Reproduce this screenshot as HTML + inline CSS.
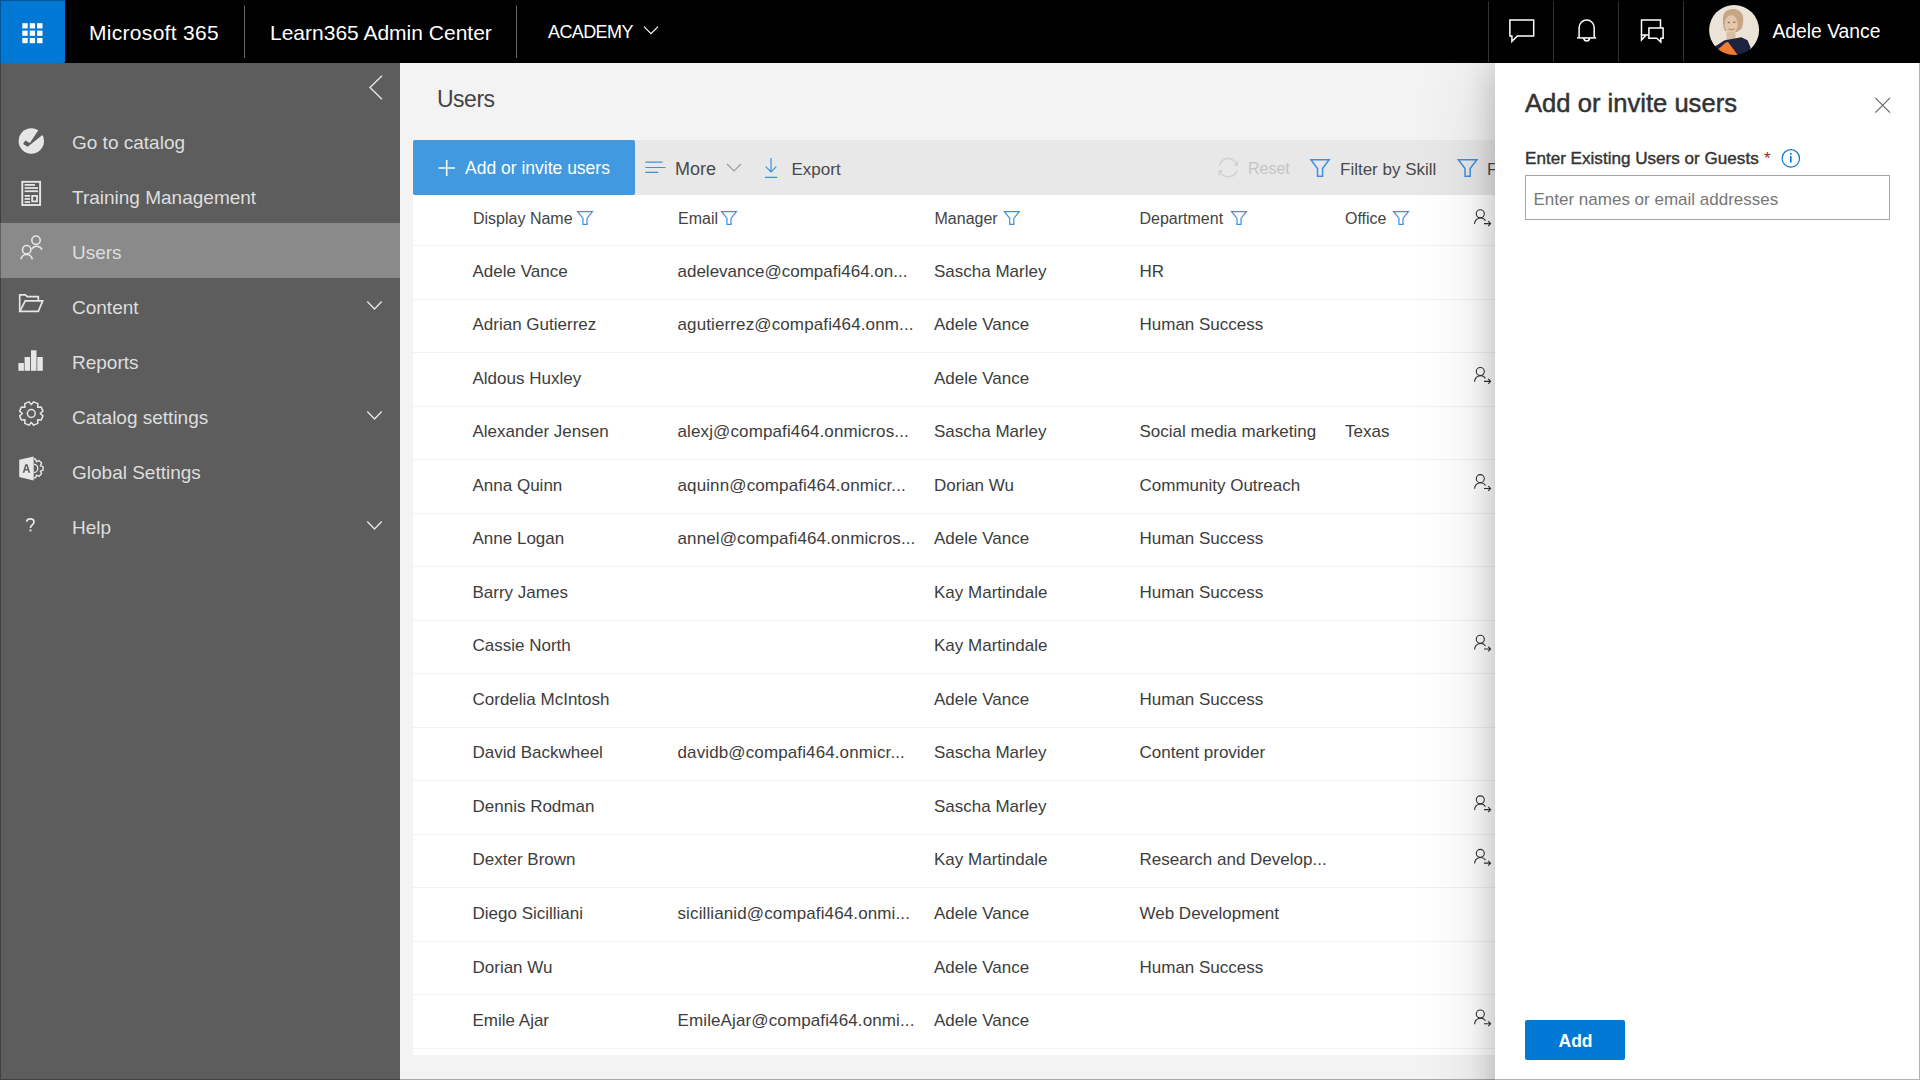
<!DOCTYPE html>
<html><head><meta charset="utf-8"><style>
*{box-sizing:border-box;margin:0;padding:0}
html,body{width:1920px;height:1080px;overflow:hidden;background:#f3f3f3;font-family:"Liberation Sans",sans-serif}
.t{position:absolute;white-space:nowrap}
.b{position:absolute}
svg{position:absolute;left:0;top:0;overflow:visible}
</style></head><body>
<div class="b" style="left:400px;top:63px;width:1520px;height:1017px;background:#f3f3f3"></div>
<div class="b" style="left:0;top:63px;width:400px;height:1017px;background:#5d5d5d"></div>
<div class="b" style="left:0;top:223px;width:400px;height:55px;background:#8a8a8a"></div>
<div class="t" style="left:72px;top:132.62px;font-size:19px;line-height:19px;color:#dedede;">Go to catalog</div>

<div class="t" style="left:72px;top:187.62px;font-size:19px;line-height:19px;color:#dedede;">Training Management</div>

<div class="t" style="left:72px;top:242.62px;font-size:19px;line-height:19px;color:#dedede;">Users</div>

<div class="t" style="left:72px;top:297.62px;font-size:19px;line-height:19px;color:#dedede;">Content</div>

<div class="t" style="left:72px;top:352.62px;font-size:19px;line-height:19px;color:#dedede;">Reports</div>

<div class="t" style="left:72px;top:407.62px;font-size:19px;line-height:19px;color:#dedede;">Catalog settings</div>

<div class="t" style="left:72px;top:462.62px;font-size:19px;line-height:19px;color:#dedede;">Global Settings</div>

<div class="t" style="left:72px;top:517.62px;font-size:19px;line-height:19px;color:#dedede;">Help</div>

<svg width="1920" height="1080"><path d="M382,75.8 L370,87.5 L382,99.2" fill="none" stroke="#e6e6e6" stroke-width="1.4"/><defs><mask id="m1"><rect x="0" y="0" width="1920" height="1080" fill="#fff"/><path d="M25.2,140.4 L29.9,143 L38.3,130.3 L46,127 L46,134 L41.8,135.6 L27.7,146.8 L23.1,143.9 Z" fill="#000"/></mask></defs><circle cx="31.3" cy="141" r="12.7" fill="#e6e6e6" mask="url(#m1)"/><rect x="22.3" y="181.8" width="17.8" height="23.2" fill="none" stroke="#e6e6e6" stroke-width="1.9"/><rect x="24.6" y="184" width="10.4" height="1.8" fill="#e6e6e6"/><rect x="24.6" y="187.1" width="13.4" height="1.8" fill="#e6e6e6"/><rect x="24.6" y="190.3" width="13.4" height="1.8" fill="#e6e6e6"/><rect x="24.6" y="195" width="5.5" height="1.8" fill="#e6e6e6"/><rect x="24.6" y="198" width="5.5" height="1.8" fill="#e6e6e6"/><rect x="24.6" y="201.2" width="5.5" height="1.8" fill="#e6e6e6"/><rect x="32.2" y="195.9" width="4.8" height="5.5" fill="none" stroke="#e6e6e6" stroke-width="1.8"/><g fill="none" stroke="#e6e6e6" stroke-width="1.6"><circle cx="36" cy="240.2" r="4.2"/><path d="M31.7,249.2 A5.7,5.7 0 0 1 41.9,249.6"/><circle cx="26.7" cy="249.7" r="4.2"/><path d="M21,259.3 A5.7,5.7 0 0 1 32.3,259.3"/></g><g fill="none" stroke="#e6e6e6" stroke-width="1.7" stroke-linejoin="miter"><path d="M19.7,311.5 V294.8 H25.3 L27.3,296.6 H38.3 V300.3"/><path d="M19.9,311.4 L25.2,300.9 H42.7 L38.3,311.4 Z"/></g><rect x="18.4" y="363" width="5.5" height="7.8" fill="#e6e6e6"/><rect x="24.6" y="357" width="5.5" height="13.8" fill="#e6e6e6"/><rect x="31" y="350.3" width="5.5" height="20.5" fill="#e6e6e6"/><rect x="37.3" y="357" width="5.5" height="13.8" fill="#e6e6e6"/><path d="M40.20,413.50 L42.96,415.87 L41.22,420.07 L37.59,419.79 L37.87,423.42 L33.67,425.16 L31.30,422.40 L28.93,425.16 L24.73,423.42 L25.01,419.79 L21.38,420.07 L19.64,415.87 L22.40,413.50 L19.64,411.13 L21.38,406.93 L25.01,407.21 L24.73,403.58 L28.93,401.84 L31.30,404.60 L33.67,401.84 L37.87,403.58 L37.59,407.21 L41.22,406.93 L42.96,411.13Z" fill="none" stroke="#e6e6e6" stroke-width="1.5" stroke-linejoin="round"/><circle cx="31.3" cy="413.5" r="3.9" fill="none" stroke="#e6e6e6" stroke-width="1.5"/><defs><mask id="m2"><rect x="0" y="0" width="1920" height="1080" fill="#fff"/><path d="M22.7,472.7 L25.3,464.3 H27.6 L30.2,472.7 H28.5 L27.9,470.6 H25 L24.4,472.7 Z M25.4,469.1 H27.5 L26.45,465.8 Z" fill="#000"/></mask></defs><path d="M19.2,459.7 L33.7,456.4 V480.6 L19.2,477 Z" fill="#e6e6e6" mask="url(#m2)"/><defs><clipPath id="gs"><rect x="33.9" y="440" width="20" height="60"/></clipPath></defs><g clip-path="url(#gs)" fill="none" stroke="#e6e6e6" stroke-width="1.4"><path d="M40.35,465.64 L43.03,466.59 L43.03,470.21 L40.35,471.16 L41.58,473.71 L39.01,476.28 L36.46,475.05 L35.51,477.73 L31.89,477.73 L30.94,475.05 L28.39,476.28 L25.82,473.71 L27.05,471.16 L24.37,470.21 L24.37,466.59 L27.05,465.64 L25.82,463.09 L28.39,460.52 L30.94,461.75 L31.89,459.07 L35.51,459.07 L36.46,461.75 L39.01,460.52 L41.58,463.09Z" stroke-linejoin="round"/><circle cx="33.7" cy="468.4" r="4.1"/></g><path d="M26.7,521.7 C26.7,518.3 34,517.3 34,521.9 C34,524.7 30.5,525.2 30.5,528" fill="none" stroke="#e6e6e6" stroke-width="1.7"/><rect x="29.5" y="529.5" width="2" height="1.9" fill="#e6e6e6"/><path d="M367.3,301.4 L374.5,308.9 L381.7,301.4" fill="none" stroke="#e6e6e6" stroke-width="1.4"/><path d="M367.3,411.4 L374.5,418.9 L381.7,411.4" fill="none" stroke="#e6e6e6" stroke-width="1.4"/><path d="M367.3,521.4 L374.5,528.9 L381.7,521.4" fill="none" stroke="#e6e6e6" stroke-width="1.4"/></svg>
<div class="t" style="left:437px;top:88.03px;font-size:23px;line-height:23px;color:#444;letter-spacing:-0.5px;">Users</div>

<div class="b" style="left:413px;top:140px;width:1090px;height:55px;background:#e8e8e8"></div>
<div class="b" style="left:413px;top:140px;width:222px;height:55px;background:#419ae0;border-radius:2px"></div>
<div class="b" style="left:413px;top:195px;width:1090px;height:860px;background:#fff"></div>
<div class="b" style="left:413px;top:245.00px;width:1090px;height:1px;background:#f2f2f2"></div>
<div class="b" style="left:413px;top:298.53px;width:1090px;height:1px;background:#f2f2f2"></div>
<div class="b" style="left:413px;top:352.07px;width:1090px;height:1px;background:#f2f2f2"></div>
<div class="b" style="left:413px;top:405.60px;width:1090px;height:1px;background:#f2f2f2"></div>
<div class="b" style="left:413px;top:459.13px;width:1090px;height:1px;background:#f2f2f2"></div>
<div class="b" style="left:413px;top:512.67px;width:1090px;height:1px;background:#f2f2f2"></div>
<div class="b" style="left:413px;top:566.20px;width:1090px;height:1px;background:#f2f2f2"></div>
<div class="b" style="left:413px;top:619.73px;width:1090px;height:1px;background:#f2f2f2"></div>
<div class="b" style="left:413px;top:673.27px;width:1090px;height:1px;background:#f2f2f2"></div>
<div class="b" style="left:413px;top:726.80px;width:1090px;height:1px;background:#f2f2f2"></div>
<div class="b" style="left:413px;top:780.33px;width:1090px;height:1px;background:#f2f2f2"></div>
<div class="b" style="left:413px;top:833.87px;width:1090px;height:1px;background:#f2f2f2"></div>
<div class="b" style="left:413px;top:887.40px;width:1090px;height:1px;background:#f2f2f2"></div>
<div class="b" style="left:413px;top:940.93px;width:1090px;height:1px;background:#f2f2f2"></div>
<div class="b" style="left:413px;top:994.47px;width:1090px;height:1px;background:#f2f2f2"></div>
<div class="b" style="left:413px;top:1048.00px;width:1090px;height:1px;background:#f2f2f2"></div>
<div class="t" style="left:465px;top:160.19px;font-size:17.5px;line-height:17.5px;color:#fff;">Add or invite users</div>

<div class="t" style="left:675px;top:159.56px;font-size:18px;line-height:18px;color:#4a4a4a;">More</div>

<div class="t" style="left:791.5px;top:160.61px;font-size:17px;line-height:17px;color:#4a4a4a;">Export</div>

<div class="t" style="left:1248px;top:161.46px;font-size:16px;line-height:16px;color:#c4c4c4;">Reset</div>

<div class="t" style="left:1340px;top:160.61px;font-size:17px;line-height:17px;color:#4a4a4a;">Filter by Skill</div>

<div class="t" style="left:1487px;top:160.61px;font-size:17px;line-height:17px;color:#4a4a4a;">F</div>

<svg width="1920" height="1080"><path d="M438.5,168 H455 M446.7,160 V176" stroke="#fff" stroke-width="1.5"/><path d="M645.3,162.1 H662.5 M645.3,167.5 H665.5 M645.3,172.4 H658.3" stroke="#3d8fe0" stroke-width="1.2"/><path d="M727,164 L734,171 L741,164" fill="none" stroke="#999" stroke-width="1.1"/><path d="M771,158 V172 M765.7,166.6 L771,172 L776.3,166.6 M765,177.3 H777.3" fill="none" stroke="#3d8fe0" stroke-width="1.2"/><g fill="none" stroke="#d2d2d2" stroke-width="1.5"><path d="M1219.3,165.8 A9,8.6 0 0 1 1237,165.5"/><path d="M1237.1,170.3 A9,8.6 0 0 1 1219.8,170.5"/></g><path d="M1233.4,165.8 H1238 V160.2 Z" fill="#d2d2d2"/><path d="M1223.2,170.2 H1218.4 V176 Z" fill="#d2d2d2"/><path d="M1310.95,159.75 H1329.15 L1322.57,168.54 V176.25 H1317.53 V168.54 Z" fill="none" stroke="#3d8fe0" stroke-width="1.5" stroke-linejoin="miter"/><path d="M1458.35,159.75 H1476.85 L1470.15,168.54 V176.25 H1465.05 V168.54 Z" fill="none" stroke="#3d8fe0" stroke-width="1.5" stroke-linejoin="miter"/><path d="M577.60,211.60 H592.40 L587.04,218.42 V224.40 H582.96 V218.42 Z" fill="none" stroke="#3d8fe0" stroke-width="1.2" stroke-linejoin="miter"/><path d="M721.60,211.60 H736.40 L731.04,218.42 V224.40 H726.96 V218.42 Z" fill="none" stroke="#3d8fe0" stroke-width="1.2" stroke-linejoin="miter"/><path d="M1004.40,211.60 H1019.20 L1013.84,218.42 V224.40 H1009.76 V218.42 Z" fill="none" stroke="#3d8fe0" stroke-width="1.2" stroke-linejoin="miter"/><path d="M1231.60,211.60 H1246.40 L1241.04,218.42 V224.40 H1236.96 V218.42 Z" fill="none" stroke="#3d8fe0" stroke-width="1.2" stroke-linejoin="miter"/><path d="M1393.60,211.60 H1408.40 L1403.04,218.42 V224.40 H1398.96 V218.42 Z" fill="none" stroke="#3d8fe0" stroke-width="1.2" stroke-linejoin="miter"/><g fill="none" stroke="#333" stroke-width="1.1"><circle cx="1480.30" cy="213.80" r="4"/><path d="M1474.60,224.00 A6,6.2 0 0 1 1485.50,220.60"/><path d="M1484.00,223.60 H1490.60 M1488.20,221.20 L1490.60,223.60 L1488.20,226.00"/></g></svg>
<div class="t" style="left:473px;top:211.46px;font-size:16px;line-height:16px;color:#444;">Display Name</div>

<div class="t" style="left:678px;top:211.46px;font-size:16px;line-height:16px;color:#444;">Email</div>

<div class="t" style="left:934.5px;top:211.46px;font-size:16px;line-height:16px;color:#444;">Manager</div>

<div class="t" style="left:1139.5px;top:211.46px;font-size:16px;line-height:16px;color:#444;">Department</div>

<div class="t" style="left:1345px;top:211.46px;font-size:16px;line-height:16px;color:#444;">Office</div>

<div class="t" style="left:472.5px;top:262.61px;font-size:17px;line-height:17px;color:#3d3d3d;">Adele Vance</div>

<div class="t" style="left:677.5px;top:262.61px;font-size:17px;line-height:17px;color:#3d3d3d;">adelevance@compafi464.on...</div>

<div class="t" style="left:934px;top:262.61px;font-size:17px;line-height:17px;color:#3d3d3d;">Sascha Marley</div>

<div class="t" style="left:1139.5px;top:262.61px;font-size:17px;line-height:17px;color:#3d3d3d;">HR</div>

<div class="t" style="left:472.5px;top:316.14px;font-size:17px;line-height:17px;color:#3d3d3d;">Adrian Gutierrez</div>

<div class="t" style="left:677.5px;top:316.14px;font-size:17px;line-height:17px;color:#3d3d3d;letter-spacing:0.12px;">agutierrez@compafi464.onm...</div>

<div class="t" style="left:934px;top:316.14px;font-size:17px;line-height:17px;color:#3d3d3d;">Adele Vance</div>

<div class="t" style="left:1139.5px;top:316.14px;font-size:17px;line-height:17px;color:#3d3d3d;">Human Success</div>

<div class="t" style="left:472.5px;top:369.68px;font-size:17px;line-height:17px;color:#3d3d3d;">Aldous Huxley</div>

<div class="t" style="left:934px;top:369.68px;font-size:17px;line-height:17px;color:#3d3d3d;">Adele Vance</div>

<div class="t" style="left:472.5px;top:423.21px;font-size:17px;line-height:17px;color:#3d3d3d;">Alexander Jensen</div>

<div class="t" style="left:677.5px;top:423.21px;font-size:17px;line-height:17px;color:#3d3d3d;letter-spacing:0.12px;">alexj@compafi464.onmicros...</div>

<div class="t" style="left:934px;top:423.21px;font-size:17px;line-height:17px;color:#3d3d3d;">Sascha Marley</div>

<div class="t" style="left:1139.5px;top:423.21px;font-size:17px;line-height:17px;color:#3d3d3d;">Social media marketing</div>

<div class="t" style="left:1345px;top:423.21px;font-size:17px;line-height:17px;color:#3d3d3d;">Texas</div>

<div class="t" style="left:472.5px;top:476.74px;font-size:17px;line-height:17px;color:#3d3d3d;">Anna Quinn</div>

<div class="t" style="left:677.5px;top:476.74px;font-size:17px;line-height:17px;color:#3d3d3d;letter-spacing:0.12px;">aquinn@compafi464.onmicr...</div>

<div class="t" style="left:934px;top:476.74px;font-size:17px;line-height:17px;color:#3d3d3d;">Dorian Wu</div>

<div class="t" style="left:1139.5px;top:476.74px;font-size:17px;line-height:17px;color:#3d3d3d;">Community Outreach</div>

<div class="t" style="left:472.5px;top:530.28px;font-size:17px;line-height:17px;color:#3d3d3d;">Anne Logan</div>

<div class="t" style="left:677.5px;top:530.28px;font-size:17px;line-height:17px;color:#3d3d3d;letter-spacing:0.12px;">annel@compafi464.onmicros...</div>

<div class="t" style="left:934px;top:530.28px;font-size:17px;line-height:17px;color:#3d3d3d;">Adele Vance</div>

<div class="t" style="left:1139.5px;top:530.28px;font-size:17px;line-height:17px;color:#3d3d3d;">Human Success</div>

<div class="t" style="left:472.5px;top:583.81px;font-size:17px;line-height:17px;color:#3d3d3d;">Barry James</div>

<div class="t" style="left:934px;top:583.81px;font-size:17px;line-height:17px;color:#3d3d3d;">Kay Martindale</div>

<div class="t" style="left:1139.5px;top:583.81px;font-size:17px;line-height:17px;color:#3d3d3d;">Human Success</div>

<div class="t" style="left:472.5px;top:637.34px;font-size:17px;line-height:17px;color:#3d3d3d;">Cassie North</div>

<div class="t" style="left:934px;top:637.34px;font-size:17px;line-height:17px;color:#3d3d3d;">Kay Martindale</div>

<div class="t" style="left:472.5px;top:690.88px;font-size:17px;line-height:17px;color:#3d3d3d;">Cordelia McIntosh</div>

<div class="t" style="left:934px;top:690.88px;font-size:17px;line-height:17px;color:#3d3d3d;">Adele Vance</div>

<div class="t" style="left:1139.5px;top:690.88px;font-size:17px;line-height:17px;color:#3d3d3d;">Human Success</div>

<div class="t" style="left:472.5px;top:744.41px;font-size:17px;line-height:17px;color:#3d3d3d;">David Backwheel</div>

<div class="t" style="left:677.5px;top:744.41px;font-size:17px;line-height:17px;color:#3d3d3d;letter-spacing:0.12px;">davidb@compafi464.onmicr...</div>

<div class="t" style="left:934px;top:744.41px;font-size:17px;line-height:17px;color:#3d3d3d;">Sascha Marley</div>

<div class="t" style="left:1139.5px;top:744.41px;font-size:17px;line-height:17px;color:#3d3d3d;">Content provider</div>

<div class="t" style="left:472.5px;top:797.94px;font-size:17px;line-height:17px;color:#3d3d3d;">Dennis Rodman</div>

<div class="t" style="left:934px;top:797.94px;font-size:17px;line-height:17px;color:#3d3d3d;">Sascha Marley</div>

<div class="t" style="left:472.5px;top:851.48px;font-size:17px;line-height:17px;color:#3d3d3d;">Dexter Brown</div>

<div class="t" style="left:934px;top:851.48px;font-size:17px;line-height:17px;color:#3d3d3d;">Kay Martindale</div>

<div class="t" style="left:1139.5px;top:851.48px;font-size:17px;line-height:17px;color:#3d3d3d;">Research and Develop...</div>

<div class="t" style="left:472.5px;top:905.01px;font-size:17px;line-height:17px;color:#3d3d3d;">Diego Sicilliani</div>

<div class="t" style="left:677.5px;top:905.01px;font-size:17px;line-height:17px;color:#3d3d3d;letter-spacing:0.12px;">sicillianid@compafi464.onmi...</div>

<div class="t" style="left:934px;top:905.01px;font-size:17px;line-height:17px;color:#3d3d3d;">Adele Vance</div>

<div class="t" style="left:1139.5px;top:905.01px;font-size:17px;line-height:17px;color:#3d3d3d;">Web Development</div>

<div class="t" style="left:472.5px;top:958.54px;font-size:17px;line-height:17px;color:#3d3d3d;">Dorian Wu</div>

<div class="t" style="left:934px;top:958.54px;font-size:17px;line-height:17px;color:#3d3d3d;">Adele Vance</div>

<div class="t" style="left:1139.5px;top:958.54px;font-size:17px;line-height:17px;color:#3d3d3d;">Human Success</div>

<div class="t" style="left:472.5px;top:1012.08px;font-size:17px;line-height:17px;color:#3d3d3d;">Emile Ajar</div>

<div class="t" style="left:677.5px;top:1012.08px;font-size:17px;line-height:17px;color:#3d3d3d;letter-spacing:0.12px;">EmileAjar@compafi464.onmi...</div>

<div class="t" style="left:934px;top:1012.08px;font-size:17px;line-height:17px;color:#3d3d3d;">Adele Vance</div>

<svg width="1920" height="1080"><g fill="none" stroke="#333" stroke-width="1.1"><circle cx="1480.30" cy="371.57" r="4"/><path d="M1474.60,381.77 A6,6.2 0 0 1 1485.50,378.37"/><path d="M1484.00,381.37 H1490.60 M1488.20,378.97 L1490.60,381.37 L1488.20,383.77"/></g><g fill="none" stroke="#333" stroke-width="1.1"><circle cx="1480.30" cy="478.63" r="4"/><path d="M1474.60,488.83 A6,6.2 0 0 1 1485.50,485.43"/><path d="M1484.00,488.43 H1490.60 M1488.20,486.03 L1490.60,488.43 L1488.20,490.83"/></g><g fill="none" stroke="#333" stroke-width="1.1"><circle cx="1480.30" cy="639.23" r="4"/><path d="M1474.60,649.43 A6,6.2 0 0 1 1485.50,646.03"/><path d="M1484.00,649.03 H1490.60 M1488.20,646.63 L1490.60,649.03 L1488.20,651.43"/></g><g fill="none" stroke="#333" stroke-width="1.1"><circle cx="1480.30" cy="799.83" r="4"/><path d="M1474.60,810.03 A6,6.2 0 0 1 1485.50,806.63"/><path d="M1484.00,809.63 H1490.60 M1488.20,807.23 L1490.60,809.63 L1488.20,812.03"/></g><g fill="none" stroke="#333" stroke-width="1.1"><circle cx="1480.30" cy="853.37" r="4"/><path d="M1474.60,863.57 A6,6.2 0 0 1 1485.50,860.17"/><path d="M1484.00,863.17 H1490.60 M1488.20,860.77 L1490.60,863.17 L1488.20,865.57"/></g><g fill="none" stroke="#333" stroke-width="1.1"><circle cx="1480.30" cy="1013.97" r="4"/><path d="M1474.60,1024.17 A6,6.2 0 0 1 1485.50,1020.77"/><path d="M1484.00,1023.77 H1490.60 M1488.20,1021.37 L1490.60,1023.77 L1488.20,1026.17"/></g></svg>
<div class="b" style="left:1495px;top:63px;width:425px;height:1400px;box-shadow:0 0 30px rgba(0,0,0,0.2),0 0 80px rgba(0,0,0,0.14)"></div>
<div class="b" style="left:1495px;top:63px;width:425px;height:1017px;background:#fff"></div>
<div class="t" style="left:1525px;top:90.63px;font-size:25.6px;line-height:25.6px;color:#333;-webkit-text-stroke:0.5px #333;">Add or invite users</div>

<svg width="1920" height="1080"><path d="M1875.3,97.9 L1890,112.6 M1890,97.9 L1875.3,112.6" stroke="#666" stroke-width="1.2"/><circle cx="1790.8" cy="158.4" r="8.7" fill="none" stroke="#0078d4" stroke-width="1.2"/><rect x="1790" y="156" width="1.6" height="6.6" fill="#0078d4"/><rect x="1790" y="153" width="1.6" height="1.7" fill="#0078d4"/></svg>
<div class="t" style="left:1525px;top:150.02px;font-size:17.1px;line-height:17.1px;color:#333;-webkit-text-stroke:0.4px #333;">Enter Existing Users or Guests</div>

<div class="t" style="left:1764px;top:149.61px;font-size:17px;line-height:17px;color:#a4262c;">*</div>

<div class="b" style="left:1525px;top:175px;width:365px;height:45px;border:1px solid #a6a6a6;background:#fff"></div>
<div class="t" style="left:1533.5px;top:190.61px;font-size:17px;line-height:17px;color:#777;">Enter names or email addresses</div>

<div class="b" style="left:1525px;top:1020px;width:100px;height:40px;background:#0078d4;border-radius:2px"></div>
<div class="t" style="left:1558.5px;top:1032.99px;font-size:17.5px;line-height:17.5px;color:#fff;font-weight:700;">Add</div>

<div class="b" style="left:0;top:0;width:1920px;height:63px;background:#000"></div>
<div class="b" style="left:0;top:0;width:65px;height:63px;background:#0078d4;border-radius:0 0 2px 0"></div>
<svg width="1920" height="1080" style="pointer-events:none"><g fill="#fff"><rect x="22.30" y="23.20" width="5.4" height="5.2"/><rect x="22.30" y="30.60" width="5.4" height="5.2"/><rect x="22.30" y="38.00" width="5.4" height="5.2"/><rect x="29.70" y="23.20" width="5.4" height="5.2"/><rect x="29.70" y="30.60" width="5.4" height="5.2"/><rect x="29.70" y="38.00" width="5.4" height="5.2"/><rect x="37.10" y="23.20" width="5.4" height="5.2"/><rect x="37.10" y="30.60" width="5.4" height="5.2"/><rect x="37.10" y="38.00" width="5.4" height="5.2"/></g><rect x="244" y="5" width="1" height="53" rx="0.5" fill="#666"/><rect x="516" y="5" width="1" height="53" rx="0.5" fill="#666"/><rect x="1488" y="1" width="1" height="61" rx="0.5" fill="#333"/><rect x="1553" y="1" width="1" height="61" rx="0.5" fill="#333"/><rect x="1618" y="1" width="1" height="61" rx="0.5" fill="#333"/><rect x="1683" y="1" width="1" height="61" rx="0.5" fill="#333"/><path d="M1509.9,19.9 H1533.7 V36 H1517.4 L1511.9,41.4 V36 H1509.9 Z" fill="none" stroke="#fff" stroke-width="1.5"/><path d="M1579.1,37.6 V27.5 A7.55,7.55 0 0 1 1594.2,27.5 V37.6" fill="none" stroke="#fff" stroke-width="1.5"/><path d="M1577,37.9 H1596.2" stroke="#fff" stroke-width="1.5"/><path d="M1583.8,38 A2.9,2.9 0 0 0 1589.6,38" fill="none" stroke="#fff" stroke-width="1.5"/><path d="M1648.5,35 H1641.5 L1641.5,40 L1646,35" fill="none" stroke="#fff" stroke-width="1.5"/><path d="M1641.5,35 V19.9 H1660.5 V27.9" fill="none" stroke="#fff" stroke-width="1.5"/><path d="M1648.9,27.9 H1663.1 V38.2 H1660.8 V42 L1656.8,38.2 H1648.9 Z" fill="none" stroke="#fff" stroke-width="1.5"/><path d="M644,26.7 L651,33.7 L658,26.7" fill="none" stroke="#fff" stroke-width="1.15"/></svg>
<svg width="1920" height="1080"><defs><clipPath id="av"><circle cx="25.1" cy="25" r="25"/></clipPath><filter id="bl" x="-10%" y="-10%" width="120%" height="120%"><feGaussianBlur stdDeviation="0.6"/></filter></defs><g clip-path="url(#av)" transform="translate(1709,5)"><g filter="url(#bl)"><rect x="-3" y="-3" width="56" height="56" fill="#ebe3d7"/><path d="M14.1,11.5 C15,6 19.3,4.2 24,4 C28,3.8 32,6 33.6,10 C35,15 34,21 32.3,23.9 L28.1,27 L16,26 C14,22 13.5,16 14.1,11.5Z" fill="#c6a684"/><ellipse cx="22.2" cy="19.4" rx="6.4" ry="9.4" fill="#e4c8ab"/><ellipse cx="19.8" cy="17.5" rx="1.3" ry="0.8" fill="#8a6a55"/><ellipse cx="25.3" cy="17.3" rx="1.3" ry="0.8" fill="#8a6a55"/><path d="M19.5,24 Q22.5,26 25.5,23.8" stroke="#b07a6a" stroke-width="1" fill="none"/><rect x="17.5" y="27" width="9" height="8" fill="#d9bda2"/><path d="M2,44 L15.7,35.3 L27.1,33.3 L32.3,32.2 L38.5,35.3 L41.6,42.6 L38,53 L2,53Z" fill="#1f2440"/><path d="M9,44.5 L16.7,37.4 L19,36.9 L31,53 L12,53Z" fill="#f07a32"/></g></g></svg>
<div class="t" style="left:89px;top:21.82px;font-size:21px;line-height:21px;color:#fff;letter-spacing:0.3px;">Microsoft 365</div>

<div class="t" style="left:270px;top:22.22px;font-size:21px;line-height:21px;color:#fff;">Learn365 Admin Center</div>

<div class="t" style="left:548px;top:23.06px;font-size:18px;line-height:18px;color:#fff;letter-spacing:-0.6px;">ACADEMY</div>

<div class="t" style="left:1772.5px;top:22.16px;font-size:19.3px;line-height:19.3px;color:#fff;">Adele Vance</div>

<div class="b" style="left:0;top:0;width:1920px;height:1080px;border:1px solid rgba(0,0,0,0.3)"></div>
</body></html>
